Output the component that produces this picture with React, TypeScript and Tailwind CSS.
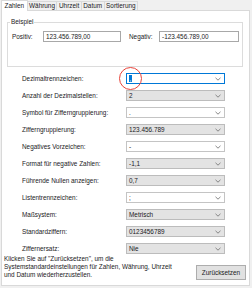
import React from 'react'

type Row = { label: string; value: string; editable?: boolean; focused?: boolean }

const ROWS: Row[] = [
  { label: 'Dezimaltrennzeichen:', value: ',', editable: true, focused: true },
  { label: 'Anzahl der Dezimalstellen:', value: '2' },
  { label: 'Symbol für Zifferngruppierung:', value: '.', editable: true },
  { label: 'Zifferngruppierung:', value: '123.456.789' },
  { label: 'Negatives Vorzeichen:', value: '-', editable: true },
  { label: 'Format für negative Zahlen:', value: '-1,1' },
  { label: 'Führende Nullen anzeigen:', value: '0,7' },
  { label: 'Listentrennzeichen:', value: ';', editable: true },
  { label: 'Maßsystem:', value: 'Metrisch' },
  { label: 'Standardziffern:', value: '0123456789' },
  { label: 'Ziffernersatz:', value: 'Nie' },
]

const TABS = ['Zahlen', 'Währung', 'Uhrzeit', 'Datum', 'Sortierung']

function Chevron() {
  return (
    <svg width="6" height="4" viewBox="0 0 6 4" className="shrink-0">
      <polyline points="0.5,0.8 3,3.2 5.5,0.8" fill="none" stroke="#7a7a7a" strokeWidth="0.9" />
    </svg>
  )
}

function Combo({ row }: { row: Row }) {
  const box = row.focused
    ? 'bg-white border-[#0078d7]'
    : row.editable
      ? 'bg-white border-[#c4c4c4]'
      : 'bg-[#e3e3e3] border-[#bcbcbc]'
  return (
    <div className={`w-[99px] h-[11px] border flex items-center justify-between pl-[2px] pr-[3px] ${box}`}>
      {row.focused ? (
        <span className="bg-[#0078d7] text-white h-[7px] w-[3px] leading-[7px] flex justify-center">{row.value}</span>
      ) : (
        <span className="leading-[9px]">{row.value}</span>
      )}
      <Chevron />
    </div>
  )
}

export default function App() {
  return (
    <div className="relative w-[252px] h-[288px] overflow-hidden bg-[#f0f0f0] text-[6.4px] text-[#1a1a24] font-['Liberation_Sans',Arial,sans-serif]">
      {/* tab strip */}
      <div className="flex items-end h-[11px] pl-[1px]">
        {TABS.map((t, i) =>
          i === 0 ? (
            <div key={t} className="relative z-10 h-[11px] bg-white border border-b-0 border-[#d9d9d9] px-[2.5px] leading-[10px]">
              {t}
            </div>
          ) : (
            <div key={t} className="h-[9px] mb-[1px] bg-[#f0f0f0] border border-l-0 border-b-0 border-[#d9d9d9] px-[1.5px] leading-[8px]">
              {t}
            </div>
          )
        )}
      </div>

      {/* panel */}
      <div className="-mt-[1px] ml-[1px] w-[249px] h-[276px] bg-white border border-[#d9d9d9] flex flex-col">
        <fieldset className="mt-[7px] ml-[5px] w-[236px] h-[49px] border border-[#dcdcdc] pl-[4px] pt-[5px]">
          <legend className="-ml-[2px] px-[1px] leading-[8px]">Beispiel</legend>
          <div className="flex items-center">
            <span className="w-[31px]">Positiv:</span>
            <div className="w-[78px] h-[11px] border border-[#a8a8a8] bg-white pl-[2px] leading-[9px]">123.456.789,00</div>
            <span className="ml-[8px] w-[30px]">Negativ:</span>
            <div className="w-[80px] h-[11px] border border-[#a8a8a8] bg-white pl-[2px] leading-[9px]">-123.456.789,00</div>
          </div>
        </fieldset>

        <div className="mt-[6px] flex flex-col gap-[6px] pl-[20px]">
          {ROWS.map(r => (
            <div key={r.label} className="flex items-center h-[11px]">
              <span className="w-[104px]">{r.label}</span>
              <Combo row={r} />
            </div>
          ))}
        </div>

        <div className="mt-[1px] flex justify-between pl-[2px] pr-[3px]">
          <div className="leading-[8px] whitespace-nowrap">
            <div>Klicken Sie auf "Zurücksetzen", um die</div>
            <div>Systemstandardeinstellungen für Zahlen, Währung, Uhrzeit</div>
            <div>und Datum wiederherzustellen.</div>
          </div>
          <button className="mt-[10px] w-[50px] h-[15px] bg-[#e1e1e1] border border-[#adadad] leading-[13px] text-center">
            Zurücksetzen
          </button>
        </div>
      </div>

      {/* red annotation circle */}
      <div className="absolute left-[119px] top-[67px] w-[23px] h-[23px] rounded-full border-[1.5px] border-[#e8433a]" />
    </div>
  )
}
